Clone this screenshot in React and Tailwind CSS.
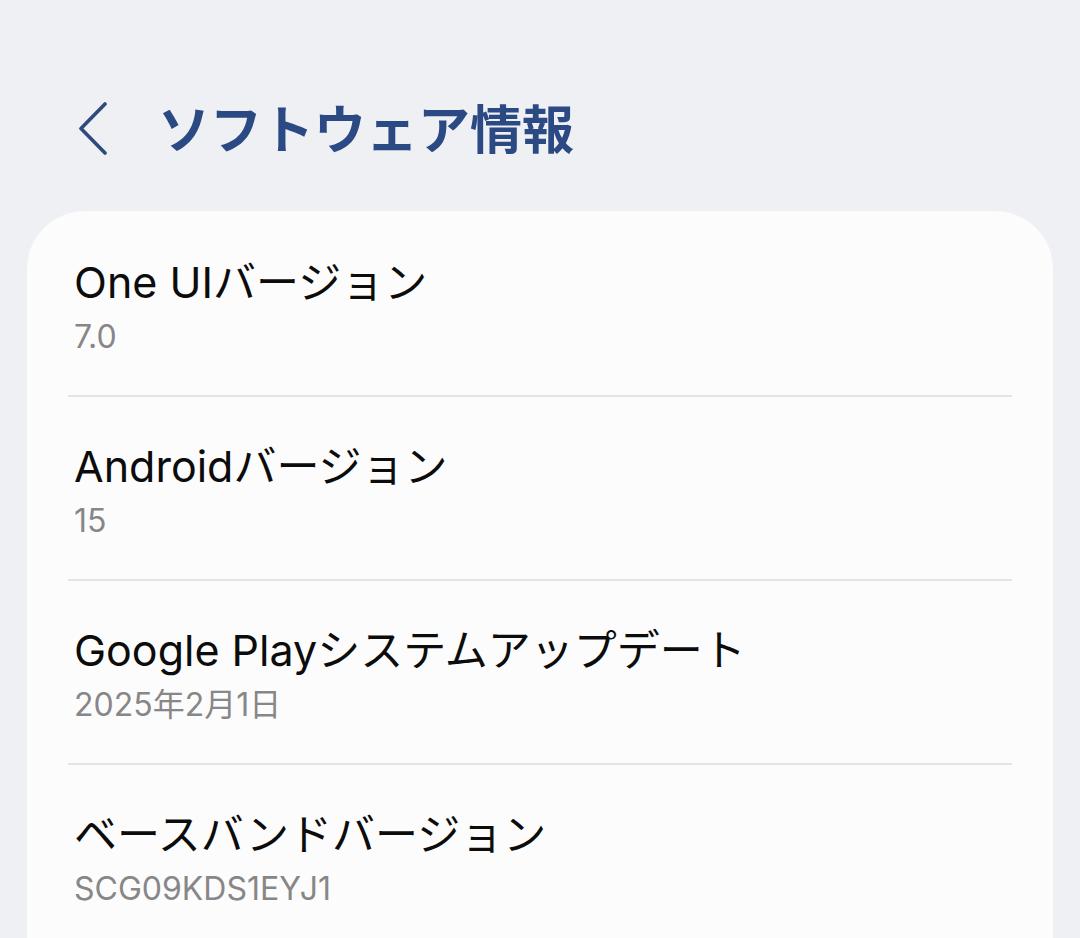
export default function App() {
  const rows = [
    { t: "One UIバージョン", s: "7.0" },
    { t: "Androidバージョン", s: "15" },
    { t: "Google Playシステムアップデート", s: "2025年2月1日" },
    { t: "ベースバンドバージョン", s: "SCG09KDS1EYJ1" },
  ];
  const font = { fontFamily: 'Inter, "Noto Sans CJK JP", sans-serif' };
  return (
    <div className="w-[1080px] h-[938px] overflow-hidden bg-[#eff0f4]" style={font}>
      <div className="h-[211px] pt-[77px]">
        <div className="h-[100px] flex items-center pl-[79px]">
          <svg width="28" height="54" viewBox="0 0 28 54" className="shrink-0 mt-[3px]">
            <path d="M26 2 L2 26.5 L26 51" fill="none" stroke="#2f4a7c" strokeWidth="3.6" strokeLinecap="round" strokeLinejoin="round" />
          </svg>
          <div
            className="ml-[51px] text-[52px] leading-[60px] font-bold text-[#2b4a84]"
            style={{ fontFamily: '"Noto Sans CJK JP", sans-serif' }}
          >
            ソフトウェア情報
          </div>
        </div>
      </div>
      <div className="mx-[27px] h-[760px] bg-[#fcfcfc] rounded-t-[58px]">
        {rows.map((r, i) => (
          <div key={i}>
            {i > 0 && <div className="mx-[41px] h-[2px] bg-[#e4e4e4]" />}
            <div className={`pl-[47px] pb-[38px] ${i === 0 ? "pt-[46px]" : "pt-[44px]"}`}>
              <div className="text-[43px] leading-[50px] text-[#0c0c0c] whitespace-nowrap">{r.t}</div>
              <div className="mt-[10px] text-[32px] leading-[40px] text-[#878787] whitespace-nowrap">{r.s}</div>
            </div>
          </div>
        ))}
      </div>
    </div>
  );
}
